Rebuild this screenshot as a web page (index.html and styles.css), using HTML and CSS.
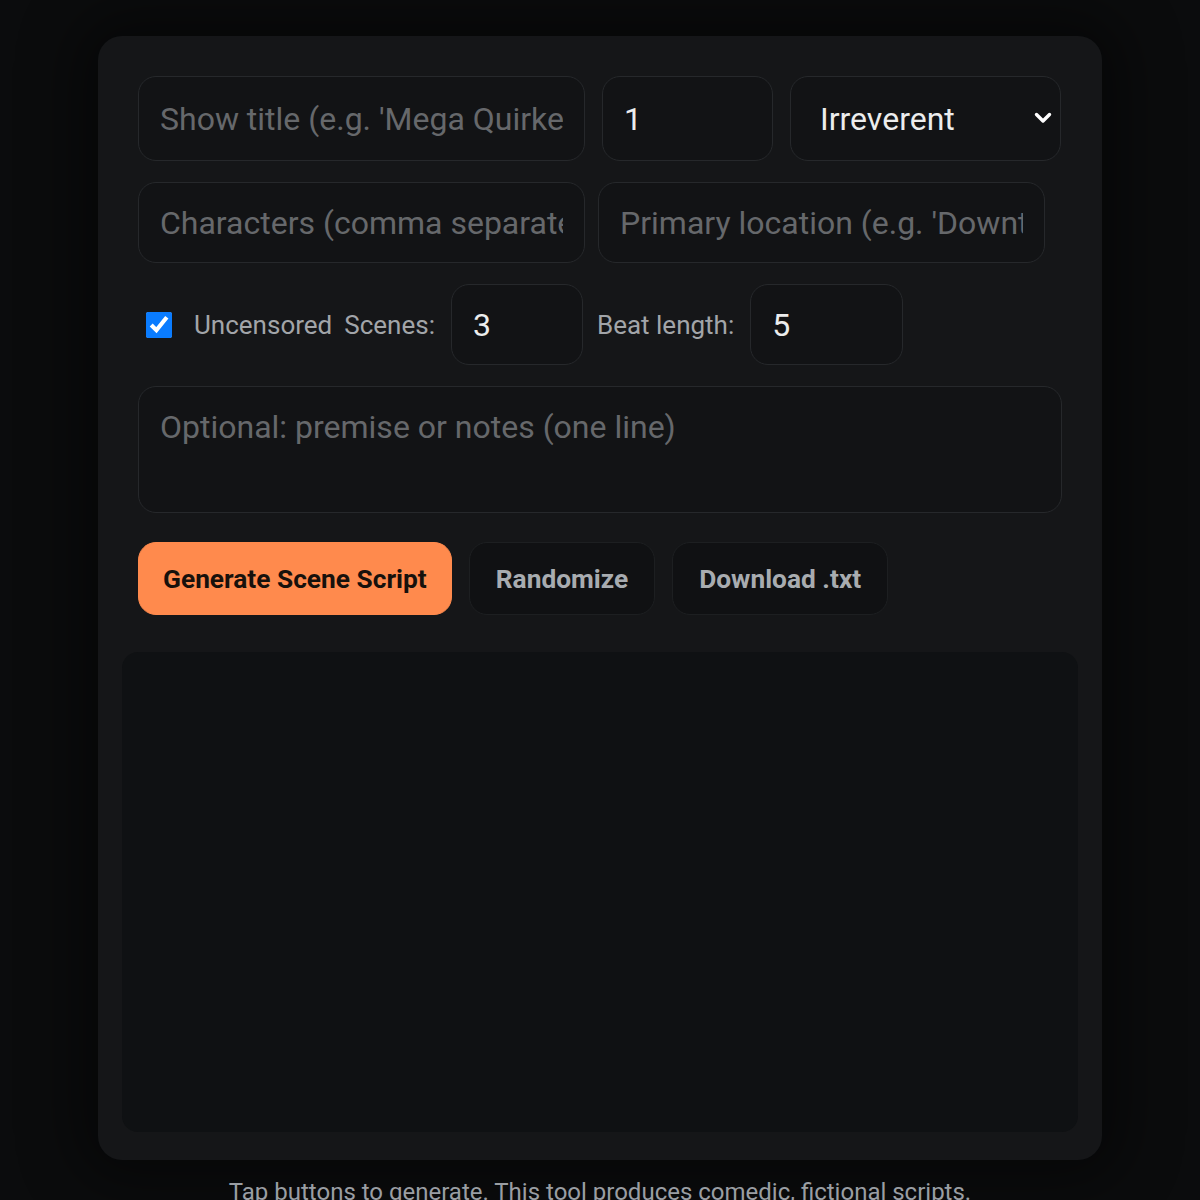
FILE: index.html
```html
<!DOCTYPE html>
<html lang="en">
<head>
<meta charset="utf-8">
<title>Scene Script Generator</title>
<link rel="stylesheet" href="styles.css">
</head>
<body>
<main class="page">
  <section class="card">
    <div class="row row-top">
      <input class="field field-title" type="text" placeholder="Show title (e.g. 'Mega Quirkers')">
      <input class="field field-num" type="text" value="1">
      <div class="select-wrap">
        <select class="field field-select">
          <option>Irreverent</option>
          <option>Deadpan</option>
          <option>Slapstick</option>
        </select>
        <svg class="chevron" viewBox="0 0 20 20" width="20" height="20" aria-hidden="true">
          <path d="M3.5 6.5 L10 13 L16.5 6.5" fill="none" stroke="#ffffff" stroke-width="3.4" stroke-linecap="round" stroke-linejoin="round"/>
        </svg>
      </div>
    </div>

    <div class="row row-second">
      <input class="field field-half" type="text" placeholder="Characters (comma separated)">
      <input class="field field-half" type="text" placeholder="Primary location (e.g. 'Downtown diner')">
    </div>

    <div class="row row-options">
      <label class="check">
        <input type="checkbox" checked>
        <span>Uncensored</span>
      </label>
      <span class="label">Scenes:</span>
      <input class="field field-scenes" type="text" value="3">
      <span class="label label-beat">Beat length:</span>
      <input class="field field-beat" type="text" value="5">
    </div>

    <textarea class="field notes" placeholder="Optional: premise or notes (one line)"></textarea>

    <div class="actions">
      <button class="btn btn-primary" type="button">Generate Scene Script</button>
      <button class="btn" type="button">Randomize</button>
      <button class="btn" type="button">Download .txt</button>
    </div>

    <div class="output"></div>
  </section>

  <p class="note">Tap buttons to generate. This tool produces comedic, fictional scripts.</p>
</main>
</body>
</html>
```

FILE: styles.css
```css
* {
  box-sizing: border-box;
}

html, body {
  margin: 0;
  padding: 0;
  background: #0b0c0d;
}

body {
  font-family: Roboto, "Liberation Sans", Arial, sans-serif;
  color: #e6e7e8;
  height: 1200px;
  overflow: hidden;
}

.page {
  display: flex;
  flex-direction: column;
  align-items: center;
  padding-top: 36px;
}

.card {
  width: 1004px;
  background: #151618;
  border-radius: 24px;
  padding: 40px 40px 28px;
  box-shadow: 0 0 60px 20px rgba(0, 0, 0, 0.45);
  display: flex;
  flex-direction: column;
}

.row {
  display: flex;
  align-items: center;
}

.field {
  font-family: inherit;
  font-size: 32px;
  color: #eceded;
  background: #121315;
  border: 1.5px solid #26282b;
  border-radius: 18px;
  padding: 0 21px;
  outline: none;
}

.field::placeholder {
  color: #66686b;
}

.row-top {
  gap: 17px;
  height: 85px;
}

.row-top .field {
  height: 85px;
}

.field-title {
  width: 447px;
}

.field-num {
  width: 171px;
}

.select-wrap {
  position: relative;
  width: 271px;
}

.field-select {
  width: 100%;
  -webkit-appearance: none;
  appearance: none;
  padding-left: 29px;
  background: #121315;
}

.chevron {
  position: absolute;
  right: 8px;
  top: 32px;
  pointer-events: none;
}

.row-second {
  gap: 13px;
  margin-top: 21px;
}

.field-half {
  width: 447px;
  height: 81px;
}

.row-options {
  margin-top: 21px;
  height: 81px;
}

.check {
  display: flex;
  align-items: center;
  font-size: 26px;
  color: #a2a5a9;
}

.check input {
  width: 26px;
  height: 26px;
  margin: 0 22px 0 8px;
  accent-color: #0a7cff;
}

.label {
  font-size: 26px;
  color: #a2a5a9;
  margin-left: 12px;
  margin-right: 16px;
}

.label-beat {
  margin-left: 14px;
  margin-right: 16px;
}

.field-scenes,
.field-beat {
  height: 81px;
}

.field-scenes {
  width: 132px;
}

.field-beat {
  width: 153px;
}

.notes {
  margin-top: 21px;
  width: 924px;
  height: 127px;
  resize: none;
  padding-top: 21px;
  line-height: 1.2;
}

.actions {
  display: flex;
  gap: 17px;
  margin-top: 29px;
}

.btn {
  font-family: inherit;
  font-size: 26.3px;
  font-weight: 700;
  height: 73px;
  padding: 0 26px;
  border-radius: 18px;
  border: 1.5px solid #1d1f21;
  background: #101113;
  color: #a8acb0;
  cursor: pointer;
}

.btn-primary {
  padding: 0 24px;
  background: #ff8a4d;
  border-color: #ff8a4d;
  color: #17110c;
}

.output {
  margin: 37px -16px 0;
  height: 480px;
  background: #0f1113;
  border-radius: 16px;
}

.note {
  margin: 18px 0 0;
  font-size: 24px;
  color: #9a9ea3;
}
```
